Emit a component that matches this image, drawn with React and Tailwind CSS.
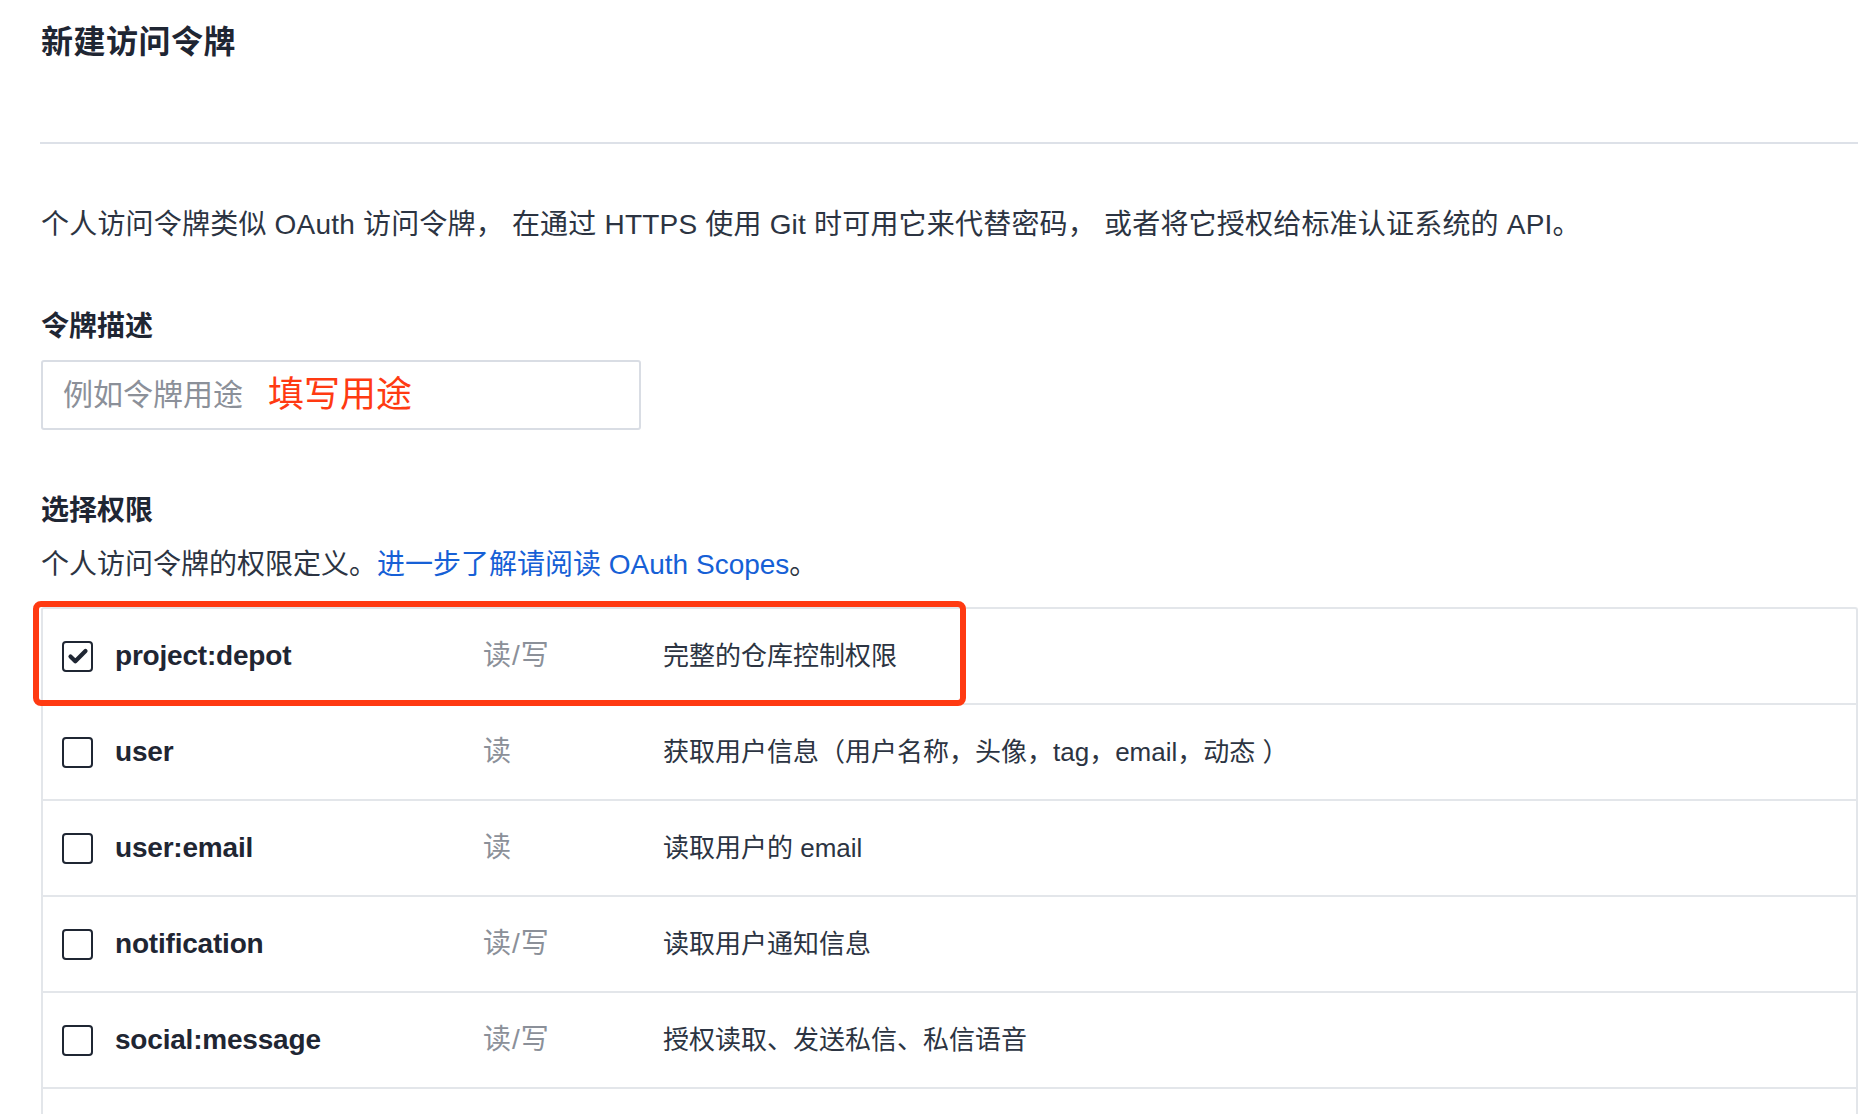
import React from 'react';

const scopes = [
  { name: 'project:depot', perm: '读/写', desc: '完整的仓库控制权限', checked: true, marked: true },
  { name: 'user', perm: '读', desc: '获取用户信息（用户名称，头像，tag，email，动态 ）' },
  { name: 'user:email', perm: '读', desc: '读取用户的 email' },
  { name: 'notification', perm: '读/写', desc: '读取用户通知信息' },
  { name: 'social:message', perm: '读/写', desc: '授权读取、发送私信、私信语音' }
];

const Checkbox = ({ checked }) => (
  <span className="w-[31px] h-[31px] shrink-0 rounded-[4px] border-[2.5px] border-[#1f2633] bg-white flex items-center justify-center">
    {checked && (
      <svg width="24" height="24" viewBox="0 0 24 24" fill="none">
        <path d="M4.5 12.5l4.8 4.8L19.5 7" stroke="#1f2633" strokeWidth="4.2" strokeLinecap="round" strokeLinejoin="round" />
      </svg>
    )}
  </span>
);

export default function App() {
  return (
    <div
      className="h-screen bg-white pl-[41px] pr-[18px] pt-[18px] overflow-hidden text-[#2c3442]"
      style={{ fontFamily: '"Liberation Sans", "Noto Sans CJK SC", sans-serif' }}
    >
      <h1 className="text-[32px] leading-[48px] font-semibold tracking-[0.5px] text-[#1f2633]">新建访问令牌</h1>

      <div className="mt-[76px] -ml-px h-[2px] bg-[#dde1e8]" />

      <p className="mt-[60px] text-[28px] leading-[42px] tracking-[0.2px]">
        个人访问令牌类似 OAuth 访问令牌， 在通过 HTTPS 使用 Git 时可用它来代替密码， 或者将它授权给标准认证系统的 API。
      </p>

      <div className="mt-[60px] text-[28px] leading-[42px] font-semibold text-[#1f2633]">令牌描述</div>
      <div className="relative mt-[12px] w-[600px] h-[70px]">
        <input
          className="w-full h-full rounded-[3px] border-2 border-[#d9dde4] pl-[20px] text-[30px] text-[#2c3442] placeholder:text-[#8b9099] outline-none"
          placeholder="例如令牌用途"
        />
        <span className="absolute left-[227px] top-0 h-full flex items-center text-[36px] text-[#ff3a12] pointer-events-none">
          填写用途
        </span>
      </div>

      <div className="mt-[60px] text-[28px] leading-[42px] font-semibold text-[#1f2633]">选择权限</div>
      <p className="mt-[12px] text-[28px] leading-[42px]">
        个人访问令牌的权限定义。
        <a href="#" className="text-[#1660d6]">进一步了解请阅读 OAuth Scopes</a>
        。
      </p>

      <div className="mt-[21px] border-2 border-b-0 border-[#e3e6ea] rounded-t-[3px]">
        {scopes.map((s) => (
          <div key={s.name} className="relative flex items-center h-[96px] border-b-2 border-[#e3e6ea] pl-[19px]">
            {s.marked && (
              <div className="absolute -left-[10px] -top-[8px] w-[933px] h-[105px] rounded-[8px] border-[6px] border-[#ff3a12] pointer-events-none" />
            )}
            <Checkbox checked={s.checked} />
            <span className="ml-[22px] w-[368px] text-[28px] font-semibold tracking-[-0.2px] text-[#1f2633]">{s.name}</span>
            <span className="w-[180px] text-[28px] tracking-[1px] text-[#8b9099]">{s.perm}</span>
            <span className="text-[26px] text-[#2c3442]">{s.desc}</span>
          </div>
        ))}
        <div className="h-[96px]" />
      </div>
    </div>
  );
}
